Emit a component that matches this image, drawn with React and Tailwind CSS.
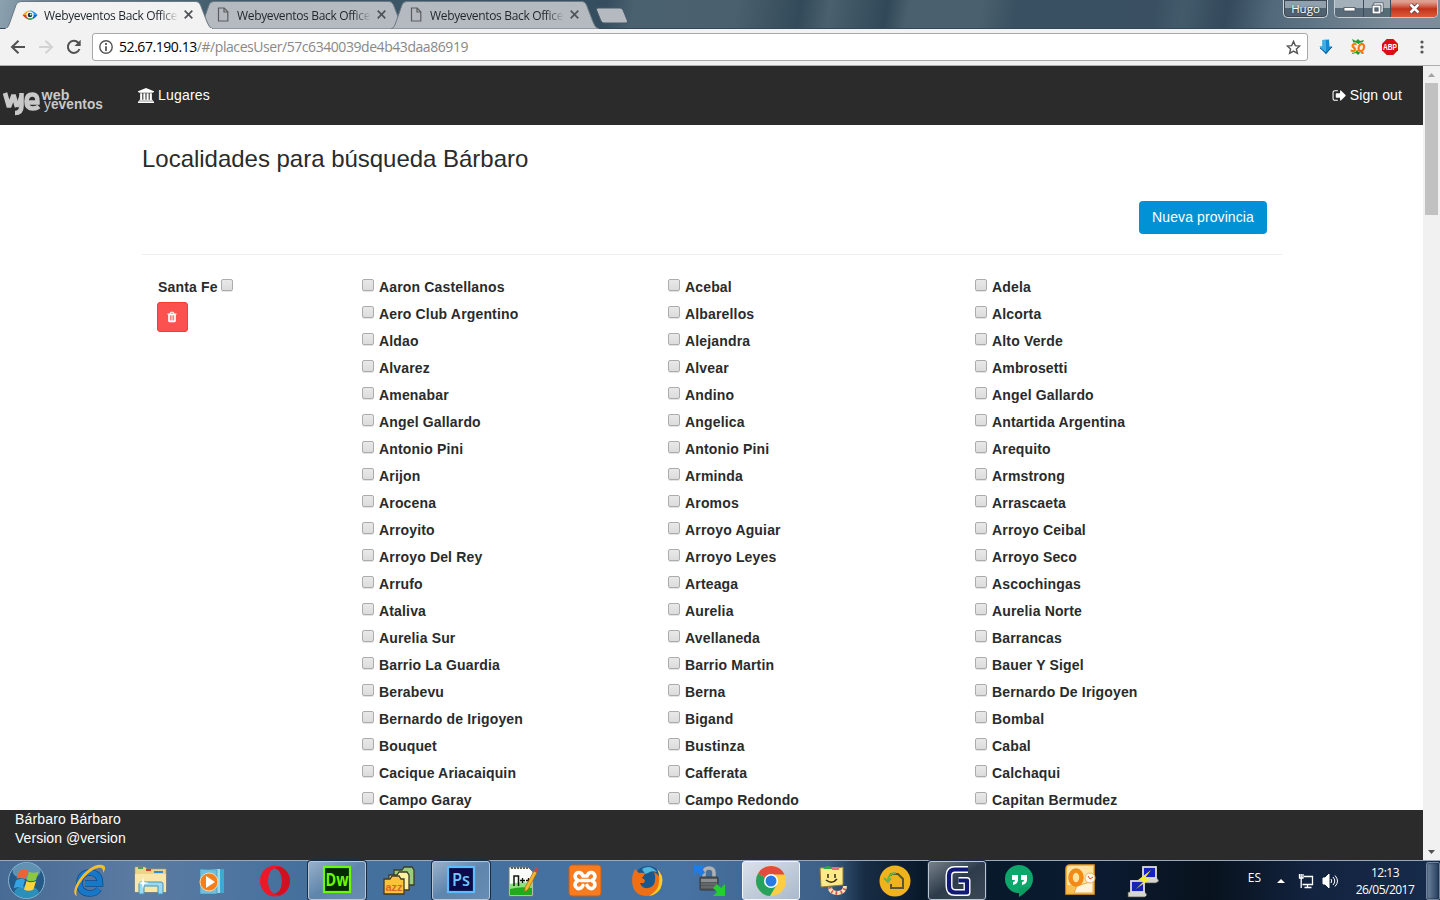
import React from "react";

const PLACES = [
  ["Aaron Castellanos", "Acebal", "Adela"],
  ["Aero Club Argentino", "Albarellos", "Alcorta"],
  ["Aldao", "Alejandra", "Alto Verde"],
  ["Alvarez", "Alvear", "Ambrosetti"],
  ["Amenabar", "Andino", "Angel Gallardo"],
  ["Angel Gallardo", "Angelica", "Antartida Argentina"],
  ["Antonio Pini", "Antonio Pini", "Arequito"],
  ["Arijon", "Arminda", "Armstrong"],
  ["Arocena", "Aromos", "Arrascaeta"],
  ["Arroyito", "Arroyo Aguiar", "Arroyo Ceibal"],
  ["Arroyo Del Rey", "Arroyo Leyes", "Arroyo Seco"],
  ["Arrufo", "Arteaga", "Ascochingas"],
  ["Ataliva", "Aurelia", "Aurelia Norte"],
  ["Aurelia Sur", "Avellaneda", "Barrancas"],
  ["Barrio La Guardia", "Barrio Martin", "Bauer Y Sigel"],
  ["Berabevu", "Berna", "Bernardo De Irigoyen"],
  ["Bernardo de Irigoyen", "Bigand", "Bombal"],
  ["Bouquet", "Bustinza", "Cabal"],
  ["Cacique Ariacaiquin", "Cafferata", "Calchaqui"],
  ["Campo Garay", "Campo Redondo", "Capitan Bermudez"],
];

function Checkbox() {
  return (
    <span className="block h-[12px] w-[12px] shrink-0 rounded-[2px] border border-[#acacac] bg-linear-to-b from-[#e9e9e9] to-[#dcdcdc] shadow-[0_1px_0_#e4e4e4]" />
  );
}

function PageIcon() {
  return (
    <svg width="12" height="15" viewBox="0 0 12 15" fill="none" stroke="#5c5c5e" strokeWidth="1.2">
      <path d="M1.5 1h5.7l3.6 3.8V14H1.5z" />
      <path d="M7 1v4h4" />
    </svg>
  );
}

function EyeIcon() {
  return (
    <svg width="16" height="16" viewBox="0 0 16 16">
      <path d="M.5 8Q4 3.500 8 3.500V8z" fill="#f5a81c" />
      <path d="M.5 8Q4 12.500 8 12.500V8z" fill="#e8382b" />
      <path d="M15.500 8Q12 3.500 8 3.500V8z" fill="#2a9df0" />
      <path d="M15.500 8Q12 12.500 8 12.500V8z" fill="#1866c4" />
      <circle cx="8" cy="8" r="3.600" fill="#fff" />
      <circle cx="8" cy="8" r="2.300" fill="#222c34" />
      <circle cx="8.700" cy="7.500" r="1" fill="#d8f0d8" />
      <path d="M5 11Q8 13.500 11 11" stroke="#3da548" strokeWidth="1.400" fill="none" />
    </svg>
  );
}

function Tab({ active }) {
  return (
    <div className={active ? "relative z-10 h-[29px] w-[208px] shrink-0" : "relative -ml-[15px] h-[29px] w-[208px] shrink-0"}>
      <svg className="absolute inset-0" width="208" height="29" viewBox="0 0 208 29">
        <path
          d="M0 29C3 28 4 25 5 22L11 5Q12 1.500 16 1.500H191Q194 1.500 195.500 5L202 22Q204 28 208 29z"
          fill={active ? "#f2f2f2" : "#b4bac0"}
          stroke="#6c7983"
          strokeWidth="1"
        />
        {active && <path d="M1 28.500H207" stroke="#f2f2f2" />}
      </svg>
      <div className="relative flex h-[29px] items-center pl-[17px]">
        <span className="flex w-[16px] justify-center">{active ? <EyeIcon /> : <PageIcon />}</span>
        <span
          className={
            active
              ? "ml-[6px] w-[134px] overflow-hidden bg-linear-to-r from-[#20252b] from-86% to-[#f2f2f2] bg-clip-text whitespace-nowrap text-transparent"
              : "ml-[6px] w-[134px] overflow-hidden bg-linear-to-r from-[#20252b] from-86% to-[#b4bac0] bg-clip-text whitespace-nowrap text-transparent"
          }
        >
          <span className="font-['Open_Sans',sans-serif] text-[12px] tracking-[-0.34px]">Webyeventos Back Office</span>
        </span>
        <svg className="ml-[6px]" width="9" height="9" viewBox="0 0 9 9" stroke="#505357" strokeWidth="1.7">
          <path d="M.7.7l7.600 7.600M8.300.7L.7 8.300" />
        </svg>
      </div>
    </div>
  );
}

function TitleBar() {
  return (
    <div className="flex h-[29px] justify-between border-b border-[#34475a] bg-[linear-gradient(100deg,#8da2b1_0,#6d8292_3%,#405b6b_16%,#344e60_42%,#4a616f_44%,#4b606e_51%,#334a5a_55.500%,#4a606e_57.500%,#304858_61.500%,#4b606e_63%,#4b606e_68%,#385061_70.500%,#3a5062_80%,#425b6b_82%,#34495b_85%,#50687a_88%,#7c8d9a_97%,#7c8d9a_100%)]">
      <div className="flex h-[29px] pl-[5px]">
        <Tab active />
        <Tab />
        <Tab />
        <svg className="mt-[7px] -ml-[4px]" width="34" height="17" viewBox="0 0 34 17">
          <path d="M3 1H25Q27 1 28 3L32.500 14Q33 16 31 16H9Q7 16 6 14L1.500 3Q1 1 3 1z" fill="#b4bac0" stroke="#465967" />
        </svg>
      </div>
      <div className="flex gap-[6px] pr-[2px]">
        <div className="flex h-[18px] w-[45px] items-center justify-center rounded-b-[5px] border border-t-0 border-[#d1d7dc] bg-linear-to-b from-[#90a0ac] from-45% to-[#50616f] to-50% font-['Open_Sans',sans-serif] text-[11.500px] text-white shadow-[inset_0_0_0_1px_#3c4955] [text-shadow:0_0_2px_#26313b]">
          Hugo
        </div>
        <div className="flex h-[18px] w-[104px] overflow-hidden rounded-b-[5px] border border-t-0 border-[#c5cdd3] shadow-[inset_0_0_0_1px_#3c4955]">
          <div className="flex w-[29px] items-center justify-center border-r border-[#3c4b58] bg-linear-to-b from-[#a3b0ba] from-45% to-[#596b79] to-50%">
            <svg width="13" height="6" viewBox="0 0 13 6"><rect x="1" y="1.500" width="11" height="3.500" fill="#fff" stroke="#49535e" strokeWidth=".8" /></svg>
          </div>
          <div className="flex w-[27px] items-center justify-center border-r border-[#3c4b58] bg-linear-to-b from-[#a3b0ba] from-45% to-[#596b79] to-50%">
            <svg width="13" height="13" viewBox="0 0 13 13" fill="none">
              <path d="M4 3.500V2h7v7H9.500" stroke="#49535e" strokeWidth="3" /><path d="M4 3.500V2h7v7H9.500" stroke="#fff" strokeWidth="1.400" />
              <rect x="2.500" y="4.500" width="6" height="6" stroke="#49535e" strokeWidth="3.400" /><rect x="2.500" y="4.500" width="6" height="6" stroke="#fff" strokeWidth="1.800" />
            </svg>
          </div>
          <div className="flex grow items-center justify-center bg-linear-to-b from-[#dfa091] from-10% via-[#c3311b] via-52% to-[#dd5a3a]">
            <svg width="13" height="11" viewBox="0 0 13 11" fill="none">
              <path d="M2.500 1.500l8 8M10.500 1.500l-8 8" stroke="#5e3a44" strokeWidth="4" /><path d="M2.500 1.500l8 8M10.500 1.500l-8 8" stroke="#fff" strokeWidth="2.500" />
            </svg>
          </div>
        </div>
      </div>
    </div>
  );
}

function Toolbar() {
  return (
    <div className="flex h-[37px] items-center border-b border-[#aeaeae] bg-[#f2f2f2] font-['Open_Sans',sans-serif]">
      <div className="flex w-[92px] items-center gap-[12px] pl-[10px]">
        <svg width="16" height="16" viewBox="0 0 16 16" fill="none" stroke="#515151" strokeWidth="2"><path d="M15 8H2.500M8.500 1.700L2 8l6.500 6.300" /></svg>
        <svg width="16" height="16" viewBox="0 0 16 16" fill="none" stroke="#d3d3d3" strokeWidth="2"><path d="M1 8h12.500M7.500 1.700L14 8l-6.500 6.300" /></svg>
        <svg width="16" height="16" viewBox="0 0 16 16" fill="none"><path d="M13.500 10A6 6 0 1 1 12.300 3.800L13.500 5" stroke="#515151" strokeWidth="2" /><path d="M14.700.7V7H8.500z" fill="#515151" /></svg>
      </div>
      <div className="flex h-[28px] w-[1216px] items-center rounded-[3px] border border-[#a8a8a8] bg-white pr-[6px] pl-[6px]">
        <svg width="14" height="14" viewBox="0 0 14 14" fill="none" stroke="#555"><circle cx="7" cy="7" r="6.200" strokeWidth="1.400" /><path d="M7 6.200V11M7 3v1.900" strokeWidth="1.800" /></svg>
        <div className="ml-[6px] grow text-[14px] leading-none text-[#888]">
          <span className="tracking-[-0.44px] text-black">52.67.190.13</span>
          <span className="tracking-[-0.44px]">/#/placesUser/57c6340039de4b43daa86919</span>
        </div>
        <svg width="15" height="15" viewBox="0 0 15 15" fill="none" stroke="#555" strokeWidth="1.400"><path d="M7.500 1.400l1.800 4.200 4.500.4-3.400 3 1 4.400-3.900-2.300-3.900 2.300 1-4.400-3.400-3 4.500-.4z" /></svg>
      </div>
      <svg className="ml-[10px]" width="16" height="16" viewBox="0 0 16 16">
        <path d="M4.500 1L11 .5l.5 7h3L8 15.500 1.500 7.500h3z" fill="#1688cb" /><path d="M4.500 1L8 .7v13L1.500 7.500h3z" fill="#3aaee9" /><path d="M2 9l6 5 6-6" stroke="#0b5b99" fill="none" />
      </svg>
      <svg className="ml-[16px]" width="16" height="18" viewBox="0 0 16 18">
        <path d="M2 1l4 2 2-2 2 2 4-1-2 4H4zM3 12h10l1 4-4-1-2 2-2-2-4 1z" fill="#219b29" />
        <text x="8" y="13.500" textAnchor="middle" fontFamily="Open Sans" fontSize="12" fontWeight="800" fontStyle="italic" fill="#f67918" stroke="#fff" strokeWidth="1" paintOrder="stroke" textLength="15" lengthAdjust="spacingAndGlyphs">SQ</text>
      </svg>
      <svg className="ml-[16px]" width="16" height="16" viewBox="0 0 16 16" overflow="visible">
        <path d="M4.700 0h6.600L16 4.700v6.600L11.300 16H4.700L0 11.300V4.700z" fill="#dd0c10" />
        <text x="8" y="11" textAnchor="middle" fontFamily="Liberation Sans" fontSize="8.500" fontWeight="700" fill="#fff" textLength="14" lengthAdjust="spacingAndGlyphs">ABP</text>
      </svg>
      <svg className="ml-[22px]" width="4" height="14" viewBox="0 0 4 14" fill="#555"><circle cx="2" cy="2" r="1.600" /><circle cx="2" cy="7" r="1.600" /><circle cx="2" cy="12" r="1.600" /></svg>
    </div>
  );
}

function Logo() {
  return (
    <svg width="102" height="34" viewBox="0 0 102 34" overflow="visible" fill="#c9c9c9" fontFamily="Liberation Sans">
      <g fill="none" stroke="#c9c9c9">
        <path d="M2 9L6 23L10.500 11L14 23" strokeWidth="4.600" strokeLinejoin="bevel" />
        <path d="M18.500 9V22Q18.500 29 12 29" strokeWidth="4.600" />
        <path d="M14 23L18 12" strokeWidth="3.500" />
        <path d="M24 18.500H34.500Q35 10.500 29.500 10.500Q23.500 10.500 23.500 17.500Q23.500 24.500 30 24.500Q33.500 24.500 36 22.500" strokeWidth="4.600" />
      </g>
      <text x="38.500" y="15.500" fontSize="15.500" fontWeight="700" textLength="28" lengthAdjust="spacingAndGlyphs">web</text>
      <text x="41" y="25" fontSize="14" textLength="59" lengthAdjust="spacingAndGlyphs">y<tspan fontWeight="700">eventos</tspan></text>
    </svg>
  );
}

function Header() {
  return (
    <header className="flex h-[59px] shrink-0 items-center bg-[#2b2b2b] text-[14px] tracking-[0.1px] text-white">
      <div className="mt-[10px] w-[138px] pl-[3px]"><Logo /></div>
      <div className="flex grow items-center gap-[4px]">
        <svg width="16" height="15" viewBox="0 0 1920 1792" fill="#fff">
          <path d="M960 0l960 384v128h-128q0 26-20.500 45t-48.500 19H197q-28 0-48.500-19T128 512H0V384zM256 640h256v768h128V640h256v768h128V640h256v768h128V640h256v768h59q28 0 48.500 19t20.500 45v64H128v-64q0-26 20.500-45t48.500-19h59zM1851 1600q28 0 48.500 19t20.500 45v128H0v-128q0-26 20.500-45T69 1600z" />
        </svg>
        <span className="tracking-[0.2px]">Lugares</span>
      </div>
      <div className="flex items-center gap-[3px] pr-[21px]">
        <svg width="15" height="15" viewBox="0 0 1792 1792" fill="#fff">
          <path d="M704 1440q0 4 1 20t.5 26.500-3 23.500-10 19.500-20.500 6.500H352q-119 0-203.500-84.500T64 1248V544q0-119 84.500-203.500T352 256h320q13 0 22.500 9.500T704 288q0 4 1 20t.5 26.500-3 23.500-10 19.500-20.500 6.500H352q-66 0-113 47t-47 113v704q0 66 47 113t113 47h312l11.500 1 11.500 3 8 5.500 7 9zM1632 896q0 26-19 45l-544 544q-19 19-45 19t-45-19-19-45v-288H512q-26 0-45-19t-19-45V704q0-26 19-45t45-19h448V352q0-26 19-45t45-19 45 19l544 544q19 19 19 45z" />
        </svg>
        <span>Sign out</span>
      </div>
    </header>
  );
}

function Content() {
  return (
    <main className="h-[685px] overflow-hidden bg-white pl-[142px] text-[#292b2c]">
      <h1 className="pt-[16px] text-[24px] leading-[36px] tracking-[-0.02px]">Localidades para búsqueda Bárbaro</h1>
      <div className="mt-[24px] flex h-[33px] w-[1125px] justify-end">
        <button className="h-[33px] w-[128px] rounded-[4px] bg-[#0092d4] text-[14px] tracking-[0.1px] text-white">Nueva provincia</button>
      </div>
      <div className="mt-[20px] w-[1140px] border-t border-[#eeeeee]" />
      <div className="flex pt-[18px] text-[14px] font-bold tracking-[0.16px]">
        <div className="w-[220px] pl-[16px]">
          <div className="flex h-[27px] items-center gap-[3px]">
            <span className="pt-[2px]">Santa Fe</span>
            <span className="-mt-[3px]"><Checkbox /></span>
          </div>
          <button className="mt-[2px] -ml-px flex h-[30px] w-[31px] items-center justify-center rounded-[3px] border border-[#f93a37] bg-[#fb524f] pr-px">
            <svg width="12" height="12" viewBox="0 0 1792 1792" fill="#fff">
              <path d="M704 1376V672q0-14-9-23t-23-9h-64q-14 0-23 9t-9 23v704q0 14 9 23t23 9h64q14 0 23-9t9-23zm256 0V672q0-14-9-23t-23-9h-64q-14 0-23 9t-9 23v704q0 14 9 23t23 9h64q14 0 23-9t9-23zm256 0V672q0-14-9-23t-23-9h-64q-14 0-23 9t-9 23v704q0 14 9 23t23 9h64q14 0 23-9t9-23zM672 384h448l-48-117q-7-9-17-11H738q-10 2-17 11zm928 32v64q0 14-9 23t-23 9h-96v948q0 83-47 143.500t-113 60.500H480q-66 0-113-58.500T320 1464V512h-96q-14 0-23-9t-9-23v-64q0-14 9-23t23-9h309l70-167q15-37 54-63t79-26h320q40 0 79 26t54 63l70 167h309q14 0 23 9t9 23z" />
            </svg>
          </button>
        </div>
        <div className="grid grid-cols-[306px_307px_300px]">
          {PLACES.flat().map((name, i) => (
            <label key={i} className="flex h-[27px] items-center gap-[5px]">
              <span className="-mt-[3px]"><Checkbox /></span>
              <span className="pt-[2px]">{name}</span>
            </label>
          ))}
        </div>
      </div>
    </main>
  );
}

function Scrollbar() {
  return (
    <div className="flex w-[17px] flex-col items-center bg-[#f1f1f1]">
      <div className="flex h-[17px] items-center"><svg width="7" height="4" viewBox="0 0 7 4" fill="#a3a3a3"><path d="M0 4L3.500 0 7 4z" /></svg></div>
      <div className="h-[132px] w-[13px] bg-[#c1c1c1]" />
      <div className="grow" />
      <div className="flex h-[17px] items-center"><svg width="7" height="4" viewBox="0 0 7 4" fill="#505050"><path d="M0 0L3.500 4 7 0z" /></svg></div>
    </div>
  );
}

const APPS = [
  {
    name: "ie",
    art: (
      <>
        <path d="M26 24Q23 28.500 17 28.500Q6.500 28 6.500 18Q7 8 17 7.500Q27 8 27 18.500H12" fill="none" stroke="#0b4c94" strokeWidth="6.600" />
        <path d="M26 24Q23 28.500 17 28.500Q6.500 28 6.500 18Q7 8 17 7.500Q27 8 27 18.500H12" fill="none" stroke="#1878c8" strokeWidth="5" />
        <path d="M4 31C-6 28 14-3 29 0c5 1 3 5 1 8 1-7-5-6-10-3C10 11 1 25 4 31z" fill="#f5bd2c" />
      </>
    ),
  },
  {
    name: "explorer",
    art: (
      <>
        <path d="M0 2h10l2 2h19v23H0z" fill="#ecd48a" stroke="#b59b54" strokeWidth=".6" />
        <path d="M3 3h5" stroke="#42a447" strokeWidth="2" /><path d="M11 5h5" stroke="#da3b28" strokeWidth="2" /><path d="M19 7h9" stroke="#328bd6" strokeWidth="2" />
        <path d="M0 9h31v18H0z" fill="#f9e7a9" />
        <path d="M4 29V19q0-2 2-2h20q2 0 2 2v10h-5v-8H9v8z" fill="#9bd9f0" stroke="#4293b9" /><path d="M8 12l1 5 5 1-5 1-1 5-1-5-4-1 4-1z" fill="#fff" />
      </>
    ),
  },
  {
    name: "media",
    art: (
      <>
        <path d="M12 5l15-1v24H12z" fill="#3ea9d1" /><path d="M8 5l15-1v24H8z" fill="#a1dced" /><path d="M3 4l17 1v24H3z" fill="#74bedc" stroke="#328cae" strokeWidth=".6" />
        <circle cx="12" cy="17" r="9" fill="#f47e1c" stroke="#ffd7a0" /><path d="M9 11l9 6-9 6z" fill="#fff" />
      </>
    ),
  },
  {
    name: "opera",
    art: (
      <>
        <path fillRule="evenodd" d="M16 .5a15 15.500 0 1 0 0 31a15 15.500 0 1 0 0-31zM16 3.500a7 12.500 0 1 1 0 25a7 12.500 0 1 1 0-25z" fill="#ee1729" />
        <path d="M16 3.500Q20 0 25 4Q31 9 31 16T25 28Q20 32 16 28.500Q23 27 23 16T16 3.500z" fill="#cf1122" />
      </>
    ),
  },
  { name: "dw", active: true, art: <><rect x="3" y="2" width="26" height="25" fill="#052900" stroke="#6afa06" strokeWidth="2.200" /><text x="16" y="21" textAnchor="middle" fontFamily="Open Sans" fontSize="18" fontWeight="700" fill="#6afa06" textLength="23" lengthAdjust="spacingAndGlyphs">Dw</text></> },
  {
    name: "azz",
    art: (
      <g stroke="#3e3d25" strokeWidth="1.300">
        <path d="M11 5h8l2-3h8l2 3v15H11z" fill="#9bce7c" /><path d="M6 10h8l2-3h8l2 3v15H6z" fill="#fdf3a3" /><path d="M1 14h6l2-3h7l2 3h3v15H1z" fill="#fac43a" />
        <text x="11" y="25.500" textAnchor="middle" fontFamily="Liberation Sans" fontSize="11" fontWeight="700" fill="#db6529" stroke="none">azz</text>
      </g>
    ),
  },
  { name: "ps", active: true, art: <><rect x="3" y="2" width="26" height="25" fill="#0a0a4a" stroke="#5cbcff" strokeWidth="2.200" /><text x="16" y="21" textAnchor="middle" fontFamily="Open Sans" fontSize="18" fontWeight="600" fill="#71c5ff" textLength="18" lengthAdjust="spacingAndGlyphs">Ps</text></> },
  {
    name: "npp",
    art: (
      <>
        <path d="M2 2h19l5 5v24H2z" fill="#f8fbf8" stroke="#717971" /><path d="M3 19q11-3 22-1v12H3z" fill="#8de07b" /><path d="M3 24q11-3 22-1v7H3z" fill="#22ab18" /><path d="M4 3h17" stroke="#58665b" strokeDasharray="2 1" strokeWidth="2" />
        <path d="M7 21V11H11.500V21" fill="none" stroke="#10140f" strokeWidth="1.500" /><path d="M13 15.500h5M15.500 13v5M19 15.500h5M21.500 13v5" stroke="#10140f" strokeWidth="1.300" />
        <path d="M27 6l3 1.500-9 17-3.500 2.500.500-4.500z" fill="#f5b72f" stroke="#a96411" strokeWidth=".7" /><path d="M27 6l1.500-4 3 1.500-1.500 4z" fill="#c9484b" />
      </>
    ),
  },
  {
    name: "xampp",
    art: (
      <>
        <rect x="0" y="0" width="32" height="31" rx="3" fill="#f77b20" stroke="#ca5e0f" />
        <g fill="none" stroke="#fff" strokeWidth="3.600" strokeLinecap="round" strokeLinejoin="round">
          <path d="M12 15.500H20" />
          <path d="M9 15.500Q5 13 6.500 9.500Q9 6 12.500 8.500L14 11H18L19.500 8.500Q23 6 25.500 9.500Q27 13 23 15.500" />
          <path d="M9 15.500Q5 18 6.500 21.500Q9 25 12.500 22.500L14 20.500M23 15.500Q27 18 25.500 21.500Q23 25 19.500 22.500L18 20.500" />
        </g>
      </>
    ),
  },
  {
    name: "firefox",
    art: (
      <>
        <circle cx="17" cy="15" r="14" fill="#17588f" /><path d="M11 4q8-5 15 3-6-2-9 1l-3 1z" fill="#53b6db" />
        <path d="M4 4l4 4q4-1 6 1l-3 4 3 2-1 3h-4q2 6 8 5 6-1 7-7 1-5-1-9 7 4 7 10-1 13-14 14Q4 31 1.500 20 0 11 4 4z" fill="#ee6f16" /><path d="M26 4q7 6 5 15-2 10-13 12 10-6 10-14 1-7-2-13z" fill="#ffca2d" />
      </>
    ),
  },
  {
    name: "winscp",
    art: (
      <>
        <path d="M11 14V8q0-5 5-5t5 5v6" fill="none" stroke="#afb1b2" strokeWidth="3.500" /><rect x="7" y="12" width="18" height="13" rx="1" fill="#55585b" stroke="#34383a" /><path d="M8 14h16v3H8z" fill="#8b8e90" /><path d="M8 19h16M8 22h16" stroke="#77797c" />
        <path d="M1 0h11L9 3.500l3 4L8 11 4 7l-3 4z" fill="#1f7ee6" /><path d="M32 31H20l4-4-4-4 4-4 4 4 4-4z" fill="#22ce31" />
      </>
    ),
  },
  {
    name: "chrome", active: true, bright: true,
    art: (
      <>
        <circle cx="16" cy="16" r="15" fill="#ffcd43" /><path d="M16 16L3 8.500A15 15 0 0 1 29.500 9.500H16z" fill="#e34b3f" /><path d="M16 16L3 8.500A15 15 0 0 0 15 31l6.500-11z" fill="#28a15c" />
        <circle cx="16" cy="16" r="7" fill="#fff" /><circle cx="16" cy="16" r="5.500" fill="#287be4" />
      </>
    ),
  },
  {
    name: "folder",
    art: (
      <>
        <path d="M3 3l11-1 2 2 10-2v18L4 22z" fill="#ffea8a" stroke="#8f7d34" /><path d="M6 4q5-6 10 0z" fill="#32a643" /><path d="M15 2h7v3h-7z" fill="#ef6c7a" />
        <path d="M11 9v4M18 9v4M9 15q6 5 11-1" stroke="#302c1b" strokeWidth="1.500" fill="none" /><path d="M13 22q0 6 8 6 7-1 7-7" stroke="#f8dfb0" strokeWidth="4" fill="none" /><path d="M13 22q0 6 8 6 7-1 7-7" stroke="#d84c52" strokeWidth="3.500" strokeDasharray="1.500 3" fill="none" />
      </>
    ),
  },
  { name: "copy", art: <><circle cx="16" cy="16" r="15.500" fill="#efb31d" /><path d="M12 11V9h7l5 5v9H12v-4" fill="none" stroke="#59553a" strokeWidth="2" /><path d="M17 8q-8 0-8 8M5 13l4 4 3-4" fill="none" stroke="#6eb24b" strokeWidth="2" /></> },
  {
    name: "g", active: true,
    art: (
      <g fill="none" strokeLinejoin="round">
        <path d="M27 4.500H14Q8 4.500 8 10.500V21Q8 27.500 14 27.500H26V15.500H17.500" stroke="#fff" strokeWidth="7" />
        <path d="M27 4.500H14Q8 4.500 8 10.500V21Q8 27.500 14 27.500H26V15.500H17.500" stroke="#121a78" strokeWidth="4.200" />
      </g>
    ),
  },
  { name: "hangouts", art: <><circle cx="16" cy="14" r="14" fill="#0fa66b" /><path d="M16 23v9q7-4 10-10z" fill="#0b9d61" /><path d="M9 10h6v5q0 4-5 5v-3q2 0 2-2H9zM18 10h6v5q0 4-5 5v-3q2 0 2-2h-3z" fill="#fff" /></> },
  {
    name: "outlook",
    art: (
      <>
        <path d="M1 4q0-4 4-4h24v29H1z" fill="#ffe3a0" stroke="#f3a11b" strokeWidth="1.500" /><path d="M2 20h26v8H2z" fill="#fbbf4e" /><path d="M12 21l16-5v12H9z" fill="#fff4d6" stroke="#e9a94a" />
        <ellipse cx="11" cy="12.500" rx="5.500" ry="7" fill="none" stroke="#f28a15" strokeWidth="4.500" />
        <circle cx="25" cy="13" r="5" fill="#fff8ea" stroke="#ebb064" /><path d="M23 11l2 3 3-2" stroke="#d84f24" fill="none" />
      </>
    ),
  },
  {
    name: "putty",
    art: (
      <>
        <path d="M14 13h16l2 3-3 2H15z" fill="#d5d5d2" stroke="#484846" strokeWidth=".7" /><rect x="16" y="2" width="13" height="11" fill="#1525ba" stroke="#deded8" strokeWidth="1.800" />
        <path d="M1 27h17l2 3-2 2H1z" fill="#d5d5d2" stroke="#484846" strokeWidth=".7" /><rect x="4" y="16" width="13" height="11" fill="#1525ba" stroke="#deded8" strokeWidth="1.800" /><path d="M24 5L11 15l6 1-8 8 14-10-5-1z" fill="#f4ed2e" />
      </>
    ),
  },
];

function TaskButton({ app }) {
  const base = "flex h-[39px] w-[58px] shrink-0 items-center justify-center rounded-[3px] border ";
  const look = !app.active
    ? "border-transparent"
    : app.bright
      ? "border-[#f2f5f9] bg-linear-to-br from-[#dbe1ea] to-[#a9b9cc]"
      : "border-[#b9c5d3] bg-linear-to-br from-white/45 via-white/15 to-white/20 shadow-[0_0_0_1px_#172d48]";
  return (
    <div className={base + look}>
      <svg width="32" height="32" viewBox="0 0 32 32" overflow="visible">{app.art}</svg>
    </div>
  );
}

function Taskbar() {
  return (
    <div className="flex h-[40px] border-t border-[#96a9be] bg-[linear-gradient(90deg,#476b94_0,#5b7ba2_10%,#44709d_21%,#43709f_35%,#4773a3_47%,#42658f_54%,#3c6088_57.500%,#182d45_60%,#08192a_64%,#0b1a30_77%,#08121d_84%,#12233f_91%,#172b4b_100%)]">
      <div className="flex w-[60px] items-center pl-[7px]">
        <svg width="39" height="39" viewBox="0 0 39 39">
          <circle cx="19.500" cy="19.500" r="18" fill="#235a88" stroke="#8cb4cf" /><ellipse cx="19.500" cy="10" rx="14" ry="8" fill="#88b7d2" opacity=".6" /><ellipse cx="19.500" cy="31" rx="12" ry="6" fill="#35c2ee" opacity=".5" />
          <path d="M12 10q5-3 9-.5l-2.500 8.500q-4-2.500-9 0z" fill="#ed6331" /><path d="M22 10.500q4 2.500 9.500 0l-2.500 8.500q-5 2.500-9.500 0z" fill="#8dc640" /><path d="M9 19.500q5-3 9-.5L15.500 27.500q-4-2.500-9 0z" fill="#35a4e5" /><path d="M19.500 20q4 2.500 9.500 0L26.500 28.500q-5 2.500-9.500 0z" fill="#ffd33c" />
        </svg>
      </div>
      <div className="flex gap-[4px]">{APPS.map((app) => <TaskButton key={app.name} app={app} />)}</div>
      <div className="flex grow items-center justify-end font-['Open_Sans',sans-serif] text-[12px] text-white">
        <span className="-mt-[5px]">ES</span>
        <svg className="ml-[16px]" width="8" height="5" viewBox="0 0 8 5"><path d="M0 5l4-4 4 4z" fill="#fff" /></svg>
        <svg className="ml-[13px]" width="16" height="16" viewBox="0 0 16 16" fill="none" stroke="#fff" strokeWidth="1.300"><path d="M6 3.500h8.500v8H4.500M9.500 12v2.500M6.500 14.500h7M1.500 1v4h3.500V1M3.200 1v4M3.200 5v10" /></svg>
        <svg className="ml-[8px]" width="16" height="16" viewBox="0 0 16 16" fill="none" stroke="#fff"><path d="M1 5h2l4-4v14l-4-4H1z" fill="#fff" /><path d="M9 6q1.500 2 0 4M11 4q3.500 4 0 8M13 2.500q5 5.500 0 11" /></svg>
        <div className="ml-[17px] w-[60px] text-center leading-[17px] tracking-[-0.5px]"><div>12:13</div><div>26/05/2017</div></div>
        <div className="ml-[11px] h-[38px] w-[14px] rounded-[2px] border border-[#71849b] bg-linear-to-r from-[#70859f] to-[#243d5c] shadow-[inset_0_0_2px_#0b1526]" />
      </div>
    </div>
  );
}

export default function App() {
  return (
    <div className="flex h-[900px] w-[1440px] flex-col overflow-hidden font-['Liberation_Sans',Arial,sans-serif]">
      <TitleBar />
      <Toolbar />
      <div className="flex h-[794px]">
        <div className="flex w-[1423px] flex-col">
          <Header />
          <Content />
          <footer className="h-[50px] bg-[#2b2b2b] pl-[15px] text-[14px] leading-[19px] tracking-[0.1px] text-white">
            <div className="tracking-[0.17px]">Bárbaro Bárbaro</div>
            <div className="tracking-[0.05px]">Version @version</div>
          </footer>
        </div>
        <Scrollbar />
      </div>
      <Taskbar />
    </div>
  );
}
